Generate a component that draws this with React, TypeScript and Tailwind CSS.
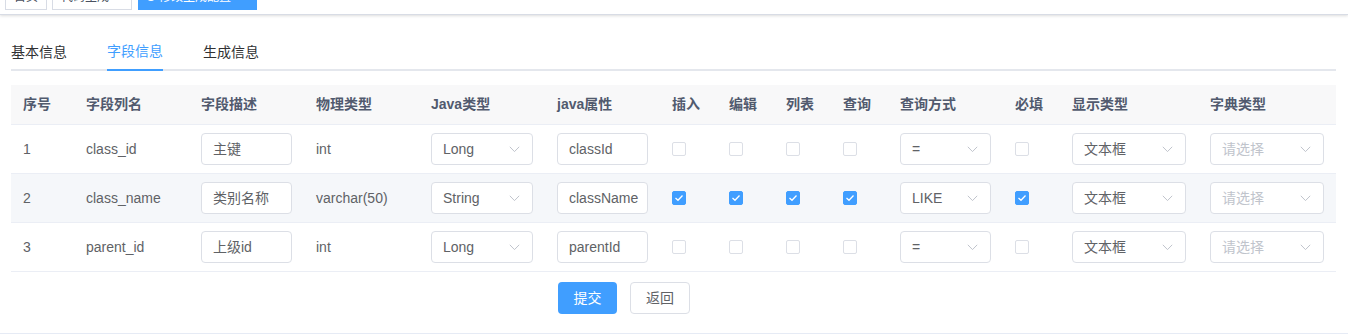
import React from "react";

const FONT = { fontFamily: '"Liberation Sans", "Noto Sans CJK SC", Arial, sans-serif' };

const COLS = "63px 115px 115px 115px 126px 115px 57px 57px 57px 57px 115px 57px 138px 138px";

function Chevron() {
  return (
    <svg width="11" height="7" viewBox="0 0 11 7" fill="none" className="shrink-0">
      <path d="M0.8 0.8 L5.5 5.6 L10.2 0.8" stroke="#c0c4cc" strokeWidth="1" />
    </svg>
  );
}

function Select({ value, placeholder, w }: { value?: string; placeholder?: string; w: string }) {
  return (
    <div
      className={`${w} h-[32px] border border-[#dcdfe6] rounded-[4px] bg-white flex items-center justify-between pl-[11px] pr-[12px]`}
    >
      {value ? (
        <span className="text-[14px] text-[#606266]">{value}</span>
      ) : (
        <span className="text-[14px] text-[#c0c4cc]">{placeholder}</span>
      )}
      <Chevron />
    </div>
  );
}

function Input({ value }: { value: string }) {
  return (
    <div className="w-[91px] h-[32px] border border-[#dcdfe6] rounded-[4px] bg-white flex items-center pl-[11px] overflow-hidden whitespace-nowrap">
      <span className="text-[14px] text-[#606266]">{value}</span>
    </div>
  );
}

function Checkbox({ checked }: { checked: boolean }) {
  return checked ? (
    <div className="w-[14px] h-[14px] rounded-[2px] bg-[#409eff] border border-[#409eff] flex items-center justify-center">
      <svg width="10" height="8" viewBox="0 0 10 8">
        <path d="M1.5 4 L4 6.3 L8.5 1.5" stroke="white" strokeWidth="1.3" fill="none" />
      </svg>
    </div>
  ) : (
    <div className="w-[14px] h-[14px] rounded-[2px] bg-white border border-[#dcdfe6]" />
  );
}

type Row = {
  n: string;
  col: string;
  desc: string;
  ptype: string;
  jtype: string;
  jfield: string;
  checks: boolean;
  query: string;
};

const rows: Row[] = [
  { n: "1", col: "class_id", desc: "主键", ptype: "int", jtype: "Long", jfield: "classId", checks: false, query: "=" },
  { n: "2", col: "class_name", desc: "类别名称", ptype: "varchar(50)", jtype: "String", jfield: "className", checks: true, query: "LIKE" },
  { n: "3", col: "parent_id", desc: "上级id", ptype: "int", jtype: "Long", jfield: "parentId", checks: false, query: "=" },
];

const headers = ["序号", "字段列名", "字段描述", "物理类型", "Java类型", "java属性", "插入", "编辑", "列表", "查询", "查询方式", "必填", "显示类型", "字典类型"];

function Cell({ children }: { children: React.ReactNode }) {
  return <div className="px-[12px] flex items-center h-full">{children}</div>;
}

export default function App() {
  return (
    <div className="w-[1348px] h-[335px] bg-white overflow-hidden" style={FONT}>
      {/* tags view */}
      <div className="mt-[-20px] h-[35px] border-b border-[#d8dce5] shadow-[0_1px_3px_0_rgba(0,0,0,0.12),0_0_3px_0_rgba(0,0,0,0.04)] flex items-start text-[12px]">
        <div className="ml-[5px] mt-[4px] h-[26px] w-[42px] border border-[#d8dce5] bg-white text-[#495060] flex items-center justify-center">
          首页
        </div>
        <div className="ml-[5px] mt-[4px] h-[26px] w-[80px] border border-[#d8dce5] bg-white text-[#495060] flex items-center pl-[8px] gap-[6px]">
          代码生成<span className="text-[13px]">×</span>
        </div>
        <div className="ml-[6px] mt-[4px] h-[26px] w-[119px] border border-[#409eff] bg-[#409eff] text-white flex items-center pl-[8px] gap-[4px]">
          <span className="w-[8px] h-[8px] rounded-full bg-white" />
          修改生成配置<span className="text-[13px]">×</span>
        </div>
      </div>

      <div className="pl-[11px] pr-[12px] pt-[16px]">
        {/* tabs */}
        <div className="flex border-b-2 border-[#e4e7ed] text-[14px]">
          <div className="h-[40px] -mb-[2px] pr-[20px]">
            <span className="h-full pt-[3px] flex items-center text-[#303133]">基本信息</span>
          </div>
          <div className="h-[40px] -mb-[2px] px-[20px]">
            <span className="h-full pt-[3px] flex items-center text-[#409eff] border-b-2 border-[#409eff]">字段信息</span>
          </div>
          <div className="h-[40px] -mb-[2px] pl-[20px]">
            <span className="h-full pt-[3px] flex items-center text-[#303133]">生成信息</span>
          </div>
        </div>

        {/* table */}
        <div className="mt-[14px] text-[14px]">
          <div className="grid h-[40px] bg-[#f8f8f9] border-b border-[#ebeef5]" style={{ gridTemplateColumns: COLS }}>
            {headers.map((h) => (
              <Cell key={h}>
                <span className="font-bold text-[#515a6e]">{h}</span>
              </Cell>
            ))}
          </div>
          {rows.map((r, i) => (
            <div
              key={r.n}
              className={`grid h-[49px] border-b border-[#ebeef5] text-[#606266] ${i === 1 ? "bg-[#f5f7fa]" : "bg-white"}`}
              style={{ gridTemplateColumns: COLS }}
            >
              <Cell>{r.n}</Cell>
              <Cell>{r.col}</Cell>
              <Cell>
                <Input value={r.desc} />
              </Cell>
              <Cell>{r.ptype}</Cell>
              <Cell>
                <Select value={r.jtype} w="w-[102px]" />
              </Cell>
              <Cell>
                <Input value={r.jfield} />
              </Cell>
              <Cell>
                <Checkbox checked={r.checks} />
              </Cell>
              <Cell>
                <Checkbox checked={r.checks} />
              </Cell>
              <Cell>
                <Checkbox checked={r.checks} />
              </Cell>
              <Cell>
                <Checkbox checked={r.checks} />
              </Cell>
              <Cell>
                <Select value={r.query} w="w-[91px]" />
              </Cell>
              <Cell>
                <Checkbox checked={r.checks} />
              </Cell>
              <Cell>
                <Select value="文本框" w="w-[114px]" />
              </Cell>
              <Cell>
                <Select placeholder="请选择" w="w-[114px]" />
              </Cell>
            </div>
          ))}
        </div>

        {/* buttons */}
        <div className="flex mt-[10px] ml-[547px] gap-[13px] text-[14px]">
          <button className="w-[59px] h-[32px] rounded-[4px] bg-[#409eff] text-white flex items-center justify-center">
            提交
          </button>
          <button className="w-[60px] h-[32px] rounded-[4px] bg-white border border-[#dcdfe6] text-[#606266] flex items-center justify-center">
            返回
          </button>
        </div>
      </div>
      <div className="mt-[19px] border-t border-[#e6ebf5]" />
    </div>
  );
}
